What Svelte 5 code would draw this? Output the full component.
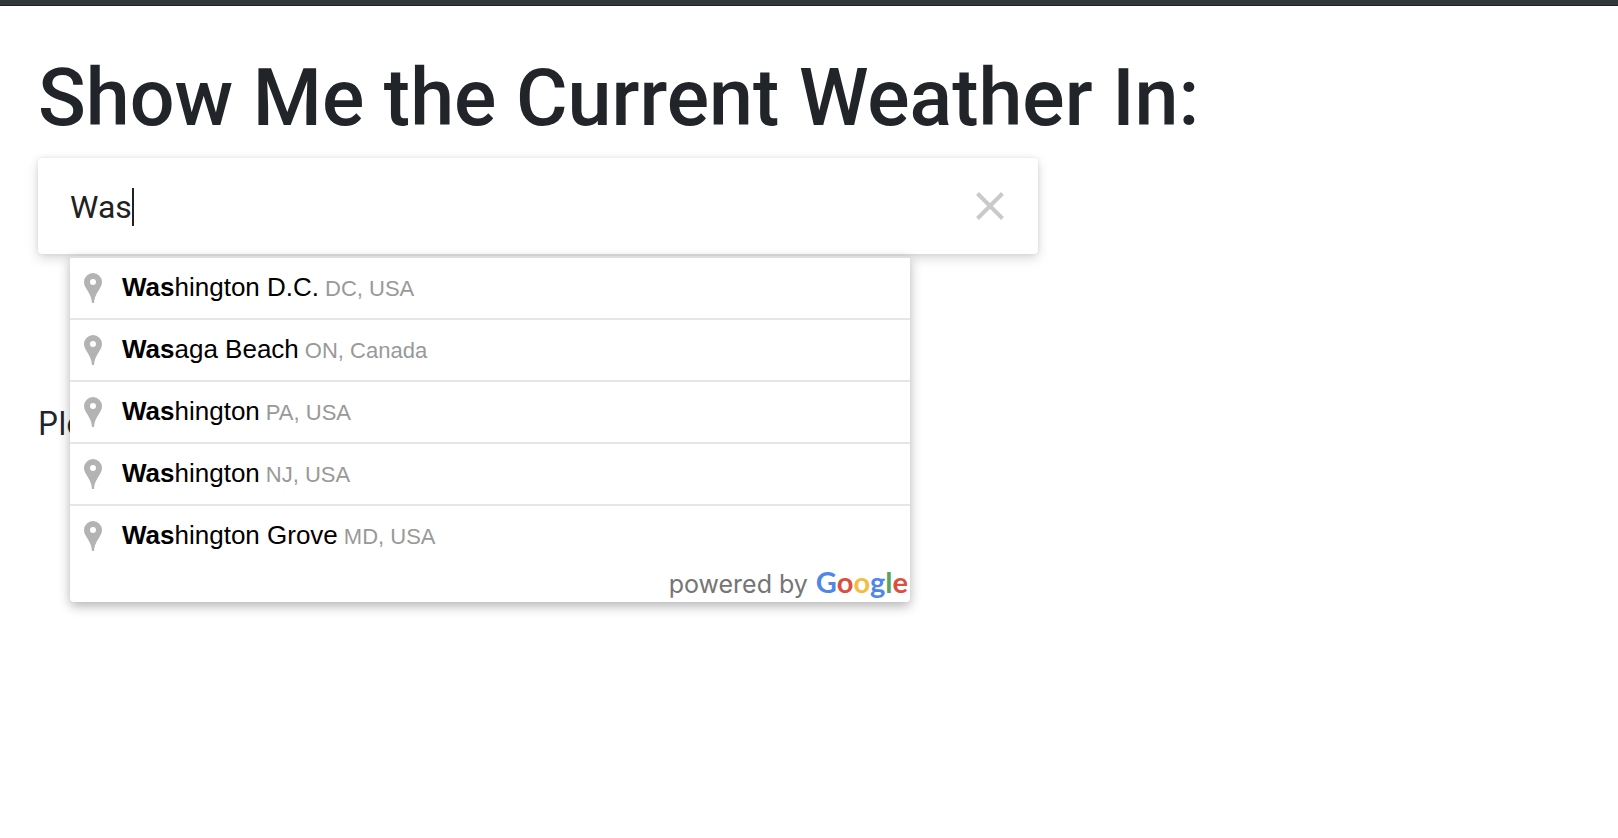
<script>
  let query = $state('Was');

  const places = [
    { match: 'Was', rest: 'hington D.C.', region: 'DC, USA' },
    { match: 'Was', rest: 'aga Beach', region: 'ON, Canada' },
    { match: 'Was', rest: 'hington', region: 'PA, USA' },
    { match: 'Was', rest: 'hington', region: 'NJ, USA' },
    { match: 'Was', rest: 'hington Grove', region: 'MD, USA' }
  ];
</script>

<header class="topbar"></header>

<main>
  <h1><label for="place">Show Me the Current Weather In:</label></h1>

  <div class="search">
    <div class="box">
      <label class="field">
        <input id="place" type="text" autocomplete="off" bind:value={query} />
        <span class="caret"></span>
      </label>
      <button class="clear" type="button" aria-label="Clear" onclick={() => (query = '')}>
        <svg viewBox="0 0 28 28" width="28" height="28" aria-hidden="true">
          <path d="M1.500 1.500 26.500 26.500M26.500 1.500 1.500 26.500" fill="none" stroke="#cacaca" stroke-width="4.100" />
        </svg>
      </button>
    </div>

    <div class="menu">
      <ul>
        {#each places as place}
          <li>
            <svg class="pin" viewBox="0 0 18 30" width="18" height="30" aria-hidden="true">
              <path
                fill="#b3b3b3"
                fill-rule="evenodd"
                d="M9 0a9 9 0 0 1 9 9c0 2.300-.9 4.200-2.100 6.200C13.200 20.200 10.600 22.500 10 30H8C7.400 22.500 4.800 20.200 2.100 15.200.9 13.200 0 11.300 0 9a9 9 0 0 1 9-9Zm0 6a3 3 0 1 0 0 6 3 3 0 0 0 0-6Z"
              />
            </svg>
            <span class="name"><b>{place.match}</b>{place.rest}</span>
            <span class="region">{place.region}</span>
          </li>
        {/each}
      </ul>
      <div class="credit">
        <span>powered by</span>
        <span class="brand"><i class="blue">G</i><i class="red">o</i><i class="yellow">o</i><i class="blue">g</i><i class="green">l</i><i class="red">e</i></span>
      </div>
    </div>
  </div>

  <p>Ple</p>
</main>

<style>
  :global(body) {
    margin: 0;
    background: #fff;
    color: #212529;
    font-family: Inter, sans-serif;
  }

  .topbar {
    height: 5px;
    background: #32373a;
    border-bottom: 1px solid #231f25;
  }

  main {
    min-height: calc(100vh - 6px);
    padding: 44px 38px;
    box-sizing: border-box;
  }

  h1 {
    margin: 0 0 12px;
    font: 500 79px/96px Roboto, sans-serif;
  }

  .search {
    position: relative;
    max-width: 1000px;
  }

  .box {
    display: flex;
    align-items: center;
    justify-content: space-between;
    height: 96px;
    padding: 0 34px 0 32px;
    box-sizing: border-box;
    border-radius: 4px;
    background: #fff;
    box-shadow: 0 4px 12px rgba(0, 0, 0, 0.16), 0 0 4px rgba(0, 0, 0, 0.08);
  }

  .field {
    display: flex;
    align-items: center;
    flex: 1;
    padding-top: 2px;
    cursor: text;
  }

  input {
    field-sizing: content;
    padding: 0;
    border: 0;
    outline: 0;
    background: transparent;
    color: #212121;
    caret-color: transparent;
    font: 400 32px/40px Roboto, sans-serif;
  }

  .caret {
    width: 2px;
    height: 38px;
    background: #212121;
  }

  .clear {
    display: flex;
    padding: 0;
    border: 0;
    background: none;
    cursor: pointer;
  }

  .menu {
    position: absolute;
    top: 100%;
    left: 32px;
    right: 128px;
    margin-top: 2px;
    border-radius: 4px;
    background: #fff;
    box-shadow: 0 4px 12px rgba(0, 0, 0, 0.3);
    font-family: "Liberation Sans", Arial, sans-serif;
  }

  ul {
    margin: 0;
    padding: 0;
    list-style: none;
  }

  li {
    display: flex;
    align-items: baseline;
    height: 60px;
    padding: 0 14px;
    border-top: 2px solid #e6e6e6;
    line-height: 58px;
    color: #999;
    font-size: 22px;
    white-space: nowrap;
    cursor: default;
  }

  li:first-child {
    border-top-color: #dedede;
  }

  .pin {
    align-self: center;
    margin-right: 20px;
  }

  .name {
    margin-right: 6px;
    color: #000;
    font-size: 26px;
  }

  .credit {
    display: flex;
    align-items: baseline;
    justify-content: flex-end;
    gap: 8px;
    height: 36px;
    padding: 0 2px;
    box-sizing: border-box;
    color: #757575;
    font: 400 25px/32px Inter, sans-serif;
  }

  .brand {
    font: 700 29px/32px Lato, sans-serif;
  }

  .brand i {
    font-style: normal;
  }

  .blue { color: #4f86ec; }
  .red { color: #d9503f; }
  .yellow { color: #f2bd42; }
  .green { color: #58a55c; }

  p {
    margin: 146px 0 0;
    font-size: 32px;
    line-height: 48px;
  }
</style>
